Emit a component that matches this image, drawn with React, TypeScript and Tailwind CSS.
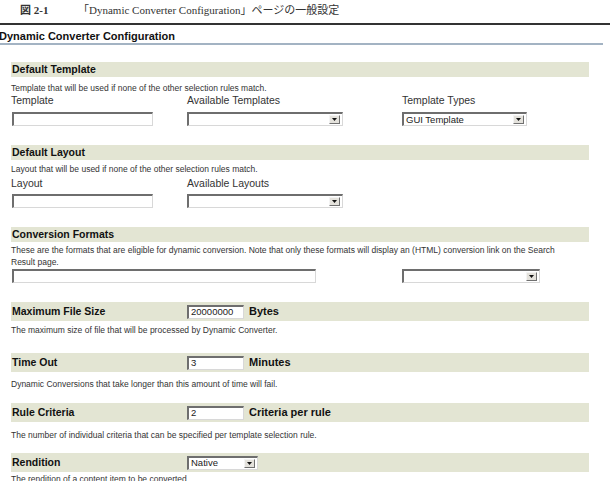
import React from 'react'

const bodyFont = { fontFamily: '"Liberation Sans", Arial, sans-serif' }

function TextBox({ width, value }: { width: string; value?: string }) {
  return (
    <div
      className={`${width} h-[14px] bg-white border-t-2 border-l-2 border-[#6e6e6e] border-b border-r border-b-[#d8d8d8] border-r-[#d8d8d8] text-[9.5px] leading-[10px] font-normal pl-[2px] text-[#222]`}
    >
      {value}
    </div>
  )
}

function Dropdown({ width, value }: { width: string; value?: string }) {
  return (
    <div
      className={`${width} h-[14px] bg-white border-t-2 border-l-2 border-[#6e6e6e] border-b border-r border-b-[#d8d8d8] border-r-[#d8d8d8] flex items-center justify-between pl-[2px] pr-[2px] font-normal`}
    >
      <span className="text-[9.5px] leading-[10px] text-[#222]">{value}</span>
      <span className="w-[11px] h-[9px] bg-[#e4e2dc] border border-t-[#f4f4f4] border-l-[#f4f4f4] border-b-[#707070] border-r-[#707070] flex items-center justify-center">
        <svg width="5" height="3" viewBox="0 0 5 3">
          <path d="M0 0h5L2.5 3z" fill="#111" />
        </svg>
      </span>
    </div>
  )
}

function SectionBar({ title }: { title: string }) {
  return (
    <div className="h-[15px] bg-[#e3e5d3] flex items-center px-[1px] text-[10.5px] font-bold text-[#111]">
      {title}
    </div>
  )
}

function Desc({ children, className = '' }: { children: React.ReactNode; className?: string }) {
  return <div className={`text-[8.5px] leading-[12px] text-[#333] ${className}`}>{children}</div>
}

function Label({ children, className = '' }: { children: React.ReactNode; className?: string }) {
  return <div className={`text-[10.5px] leading-[12px] text-[#333] ${className}`}>{children}</div>
}

function ValueRow({
  title,
  control,
  unit,
}: {
  title: string
  control: React.ReactNode
  unit?: string
}) {
  return (
    <div className="h-[19px] bg-[#e3e5d3] flex items-center px-[1px] text-[10.5px] font-bold text-[#111]">
      <span className="w-[175px]">{title}</span>
      {control}
      {unit && <span className="ml-[5px] text-[11px]">{unit}</span>}
    </div>
  )
}

export default function App() {
  return (
    <div className="w-[610px] h-[481px] overflow-hidden bg-white" style={bodyFont}>
      {/* figure caption */}
      <div
        className="h-[23px] flex items-start pt-[2px] pl-[20px] text-[11px] text-[#333]"
        style={{ fontFamily: '"Liberation Serif", "Noto Sans CJK JP", serif' }}
      >
        <span className="font-bold w-[58px]">図 2-1</span>
        <span>「Dynamic Converter Configuration」ページの一般設定</span>
      </div>
      <div className="h-[2px] bg-[#333]" />

      {/* page title */}
      <div className="h-[18px] pt-[6px] -ml-[1px] text-[11px] leading-[11px] font-bold text-[#111]">
        Dynamic Converter Configuration
      </div>
      <div className="h-[2px] w-[603px] bg-[#a3b3c3]" />

      <div className="w-[578px] ml-[11px]">
        {/* Default Template */}
        <div className="mt-[17px]">
          <SectionBar title="Default Template" />
          <Desc className="mt-[5px]">Template that will be used if none of the other selection rules match.</Desc>
          <div className="flex">
            <div className="w-[176px]">
              <Label>Template</Label>
              <div className="mt-[6px] ml-[1px]">
                <TextBox width="w-[141px]" />
              </div>
            </div>
            <div className="w-[215px]">
              <Label>Available Templates</Label>
              <div className="mt-[6px]">
                <Dropdown width="w-[156px]" />
              </div>
            </div>
            <div>
              <Label>Template Types</Label>
              <div className="mt-[6px]">
                <Dropdown width="w-[125px]" value="GUI Template" />
              </div>
            </div>
          </div>
        </div>

        {/* Default Layout */}
        <div className="mt-[19px]">
          <SectionBar title="Default Layout" />
          <Desc className="mt-[3px]">Layout that will be used if none of the other selection rules match.</Desc>
          <div className="flex">
            <div className="w-[176px]">
              <Label className="mt-[2px]">Layout</Label>
              <div className="mt-[5px] ml-[1px]">
                <TextBox width="w-[141px]" />
              </div>
            </div>
            <div>
              <Label className="mt-[2px]">Available Layouts</Label>
              <div className="mt-[5px]">
                <Dropdown width="w-[156px]" />
              </div>
            </div>
          </div>
        </div>

        {/* Conversion Formats */}
        <div className="mt-[19px]">
          <SectionBar title="Conversion Formats" />
          <Desc className="mt-[2px]">
            These are the formats that are eligible for dynamic conversion. Note that only these formats will display an (HTML) conversion link on the Search
            <br />
            Result page.
          </Desc>
          <div className="flex mt-[1px]">
            <div className="w-[390px] ml-[1px]">
              <TextBox width="w-[304px]" />
            </div>
            <Dropdown width="w-[138px]" />
          </div>
        </div>

        {/* Maximum File Size */}
        <div className="mt-[19px]">
          <ValueRow title="Maximum File Size" control={<TextBox width="w-[57px]" value="20000000" />} unit="Bytes" />
          <Desc className="mt-[3px]">The maximum size of file that will be processed by Dynamic Converter.</Desc>
        </div>

        {/* Time Out */}
        <div className="mt-[17px]">
          <ValueRow title="Time Out" control={<TextBox width="w-[57px]" value="3" />} unit="Minutes" />
          <Desc className="mt-[6px]">Dynamic Conversions that take longer than this amount of time will fail.</Desc>
        </div>

        {/* Rule Criteria */}
        <div className="mt-[13px]">
          <ValueRow title="Rule Criteria" control={<TextBox width="w-[57px]" value="2" />} unit="Criteria per rule" />
          <Desc className="mt-[7px]">The number of individual criteria that can be specified per template selection rule.</Desc>
        </div>

        {/* Rendition */}
        <div className="mt-[12px]">
          <ValueRow title="Rendition" control={<Dropdown width="w-[71px]" value="Native" />} />
          <Desc className="mt-[1px]">The rendition of a content item to be converted.</Desc>
        </div>
      </div>
    </div>
  )
}
